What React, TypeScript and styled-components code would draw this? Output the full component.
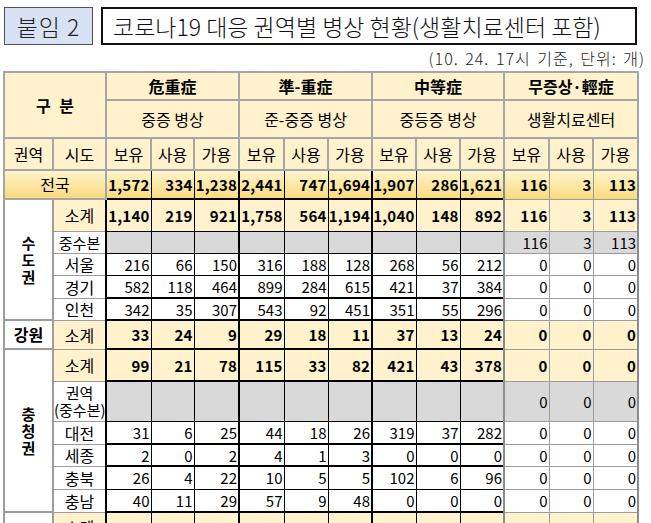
import React from 'react';
import styled, { createGlobalStyle, css } from 'styled-components';

const GlobalStyle = createGlobalStyle`
  html, body {
    margin: 0;
    padding: 0;
    background: #fff;
  }
  body {
    font-family: "Noto Sans CJK KR", "Noto Sans", sans-serif;
    color: #000;
  }
`;

const CREAM = '#fff2cc';
const GRAY = '#d9d9d9';
const HEAD_LINE = '#a6a6a6';
const SOFT_LINE = '#9c9c9c';

type Tone = 'total' | 'cream' | 'white' | 'gray';
type Kind = 'sub' | 'plain' | 'hq';

interface Row {
    sido: string;
    kind: Kind;
    h: number;
    vals: (number | null)[];
    thick?: boolean;
    small?: boolean;
}

interface Region {
    name: string;
    vertical: boolean;
    rows: Row[];
}

const groups = [
    { top: '危重症', sub: '중증 병상' },
    { top: '準-重症', sub: '준-중증 병상' },
    { top: '中等症', sub: '중등증 병상' },
    { top: '무증상·輕症', sub: '생활치료센터' },
];

const widths = [49, 53, 45, 43, 45, 45, 44, 44, 44, 44, 44, 45, 44, 45];

const nation = [1572, 334, 1238, 2441, 747, 1694, 1907, 286, 1621, 116, 3, 113];

const hqEmpty = (a: number, b: number, c: number) => [null, null, null, null, null, null, null, null, null, a, b, c];

const regions: Region[] = [
    {
        name: '수도권',
        vertical: true,
        rows: [
            { sido: '소계', kind: 'sub', h: 32, thick: true, vals: [1140, 219, 921, 1758, 564, 1194, 1040, 148, 892, 116, 3, 113] },
            { sido: '중수본', kind: 'hq', h: 22, small: true, vals: hqEmpty(116, 3, 113) },
            { sido: '서울', kind: 'plain', h: 22, vals: [216, 66, 150, 316, 188, 128, 268, 56, 212, 0, 0, 0] },
            { sido: '경기', kind: 'plain', h: 23, vals: [582, 118, 464, 899, 284, 615, 421, 37, 384, 0, 0, 0] },
            { sido: '인천', kind: 'plain', h: 22, thick: true, vals: [342, 35, 307, 543, 92, 451, 351, 55, 296, 0, 0, 0] },
        ],
    },
    {
        name: '강원',
        vertical: false,
        rows: [
            { sido: '소계', kind: 'sub', h: 29, thick: true, vals: [33, 24, 9, 29, 18, 11, 37, 13, 24, 0, 0, 0] },
        ],
    },
    {
        name: '충청권',
        vertical: true,
        rows: [
            { sido: '소계', kind: 'sub', h: 32, thick: true, vals: [99, 21, 78, 115, 33, 82, 421, 43, 378, 0, 0, 0] },
            { sido: '권역\n(중수본)', kind: 'hq', h: 40, thick: true, small: true, vals: hqEmpty(0, 0, 0) },
            { sido: '대전', kind: 'plain', h: 23, vals: [31, 6, 25, 44, 18, 26, 319, 37, 282, 0, 0, 0] },
            { sido: '세종', kind: 'plain', h: 22, thick: true, vals: [2, 0, 2, 4, 1, 3, 0, 0, 0, 0, 0, 0] },
            { sido: '충북', kind: 'plain', h: 23, thick: true, vals: [26, 4, 22, 10, 5, 5, 102, 6, 96, 0, 0, 0] },
            { sido: '충남', kind: 'plain', h: 23, vals: [40, 11, 29, 57, 9, 48, 0, 0, 0, 0, 0, 0] },
        ],
    },
    {
        name: '호남권',
        vertical: true,
        rows: [
            { sido: '소계', kind: 'sub', h: 30, thick: true, vals: [190, 39, 151, 175, 56, 119, 220, 40, 180, 0, 0, 0] },
            { sido: '광주', kind: 'plain', h: 23, vals: [60, 12, 48, 55, 20, 35, 80, 14, 66, 0, 0, 0] },
            { sido: '전북', kind: 'plain', h: 23, vals: [70, 15, 55, 60, 18, 42, 70, 12, 58, 0, 0, 0] },
            { sido: '전남', kind: 'plain', h: 23, vals: [60, 12, 48, 60, 18, 42, 70, 14, 56, 0, 0, 0] },
        ],
    },
];

const toneBg = (t: Tone) =>
    t === 'total'
        ? 'linear-gradient(#fff5cc, #f8da80)'
        : t === 'cream'
        ? CREAM
        : t === 'gray'
        ? GRAY
        : '#fff';

const kindTone = (k: Kind): Tone => (k === 'sub' ? 'cream' : k === 'hq' ? 'gray' : 'white');

function App() {
    return (
        <Page>
            <GlobalStyle />
            <TitleBar>
                <Tag>붙임 2</Tag>
                <TitleBox>코로나19 대응 권역별 병상 현황(생활치료센터 포함)</TitleBox>
            </TitleBar>
            <Note>(10. 24. 17시 기준, 단위: 개)</Note>
            <Sheet>
                <colgroup>
                    {widths.map((w, i) => (
                        <col key={i} style={{ width: w }} />
                    ))}
                </colgroup>
                <thead>
                    <Tr $h={28}>
                        <Th colSpan={2} rowSpan={2} $bold $wide>
                            구 분
                        </Th>
                        {groups.map((g) => (
                            <Th key={g.top} colSpan={3} $bold>
                                {g.top}
                            </Th>
                        ))}
                    </Tr>
                    <Tr $h={38}>
                        {groups.map((g) => (
                            <Th key={g.sub} colSpan={3}>
                                {g.sub}
                            </Th>
                        ))}
                    </Tr>
                    <Tr $h={32}>
                        <Th>권역</Th>
                        <Th>시도</Th>
                        {groups.map((g) =>
                            ['보유', '사용', '가용'].map((s) => <Th key={g.top + s}>{s}</Th>)
                        )}
                    </Tr>
                </thead>
                <tbody>
                    <Tr $h={29}>
                        <LabelCell colSpan={2} $tone="total">
                            전국
                        </LabelCell>
                        {nation.map((v, i) => (
                            <Num key={i} $tone="total" $bold $grp={Math.floor(i / 3)} $lead={i % 3 === 0} $thick={false}>
                                {v.toLocaleString('en-US')}
                            </Num>
                        ))}
                    </Tr>
                    {regions.map((r) =>
                        r.rows.map((row, ri) => (
                            <Tr key={r.name + row.sido} $h={row.h}>
                                {ri === 0 && (
                                    <RegionCell rowSpan={r.rows.length}>
                                        {r.vertical ? (
                                            <Stack>
                                                {r.name.split('').map((c) => (
                                                    <span key={c}>{c}</span>
                                                ))}
                                            </Stack>
                                        ) : (
                                            r.name
                                        )}
                                    </RegionCell>
                                )}
                                <SidoCell $tone={row.kind === 'sub' ? 'cream' : 'white'} $small={!!row.small}>
                                    {row.sido.split('\n').map((l) => (
                                        <div key={l}>{l}</div>
                                    ))}
                                </SidoCell>
                                {row.vals.map((v, i) => (
                                    <Num
                                        key={i}
                                        $tone={kindTone(row.kind)}
                                        $bold={row.kind === 'sub'}
                                        $grp={Math.floor(i / 3)}
                                        $lead={i % 3 === 0}
                                        $thick={!!row.thick}
                                    >
                                        {v === null ? '' : v.toLocaleString('en-US')}
                                    </Num>
                                ))}
                            </Tr>
                        ))
                    )}
                </tbody>
            </Sheet>
        </Page>
    );
}

const Page = styled.div`
    width: 651px;
`;

const TitleBar = styled.header`
    display: flex;
    gap: 8px;
    padding: 7px 0 0 4px;
    height: 38px;
`;

const Tag = styled.div`
    width: 89px;
    box-sizing: border-box;
    border: 1px solid #505050;
    background: #d9e1f4;
    display: flex;
    align-items: center;
    justify-content: center;
    font-size: 23px;
    font-weight: 300;
    letter-spacing: 1px;
    color: #222;
`;

const TitleBox = styled.div`
    width: 536px;
    box-sizing: border-box;
    border: 2px solid #111;
    padding-left: 10px;
    display: flex;
    align-items: center;
    font-size: 23px;
    font-weight: 300;
    color: #111;
    white-space: nowrap;
`;

const Note = styled.div`
    height: 26px;
    line-height: 26px;
    text-align: right;
    padding-right: 6px;
    font-size: 16px;
    font-weight: 300;
    letter-spacing: 1px;
    word-spacing: 2px;
    color: #222;
`;

const Sheet = styled.table`
    margin-left: 3px;
    width: 634px;
    border-collapse: collapse;
    table-layout: fixed;
    border: 2px solid #8c8c8c;
    line-height: 17px;
`;

const Tr = styled.tr<{ $h: number }>`
    height: ${(p) => p.$h}px;
`;

const Th = styled.th<{ $bold?: boolean; $wide?: boolean }>`
    background: ${CREAM};
    border: 2px solid ${HEAD_LINE};
    padding: 0;
    font-size: 16px;
    font-weight: ${(p) => (p.$bold ? 700 : 400)};
    word-spacing: ${(p) => (p.$wide ? 5 : 0)}px;
    text-align: center;
    vertical-align: middle;
    white-space: nowrap;
`;

const LabelCell = styled.td<{ $tone: Tone }>`
    background: ${(p) => toneBg(p.$tone)};
    border: 2px solid ${HEAD_LINE};
    padding: 0;
    font-size: 16px;
    text-align: center;
`;

const RegionCell = styled.td`
    background: #fff;
    border: 2px solid ${SOFT_LINE};
    padding: 0;
    font-size: 16px;
    font-weight: 700;
    text-align: center;
    vertical-align: middle;
`;

const Stack = styled.div`
    display: flex;
    flex-direction: column;
    align-items: center;
    font-size: 15px;
    line-height: 17px;
`;

const SidoCell = styled.td<{ $tone: Tone; $small: boolean }>`
    background: ${(p) => toneBg(p.$tone)};
    border: 1px solid ${SOFT_LINE};
    padding: 0;
    font-size: ${(p) => (p.$small ? 15 : 16)}px;
    line-height: ${(p) => (p.$small ? 17 : 18)}px;
    text-align: center;
    vertical-align: middle;
    white-space: nowrap;
`;

const Num = styled.td<{ $tone: Tone; $bold: boolean; $grp: number; $lead: boolean; $thick: boolean }>`
    background: ${(p) => toneBg(p.$tone)};
    padding: 0 1px 0 0;
    text-align: right;
    vertical-align: middle;
    font-size: 15px;
    font-weight: ${(p) => (p.$bold ? 700 : 400)};
    letter-spacing: ${(p) => (p.$bold ? 0.2 : 0)}px;
    white-space: nowrap;
    border: 1px solid ${(p) => (p.$grp === 3 ? SOFT_LINE : '#000')};
    ${(p) =>
        p.$lead &&
        css`
            border-left: 2px solid ${p.$grp === 3 ? '#8c8c8c' : '#000'};
        `}
    ${(p) =>
        p.$thick &&
        p.$grp < 3 &&
        css`
            border-top: 2px solid #000;
        `}
`;

export default App;
